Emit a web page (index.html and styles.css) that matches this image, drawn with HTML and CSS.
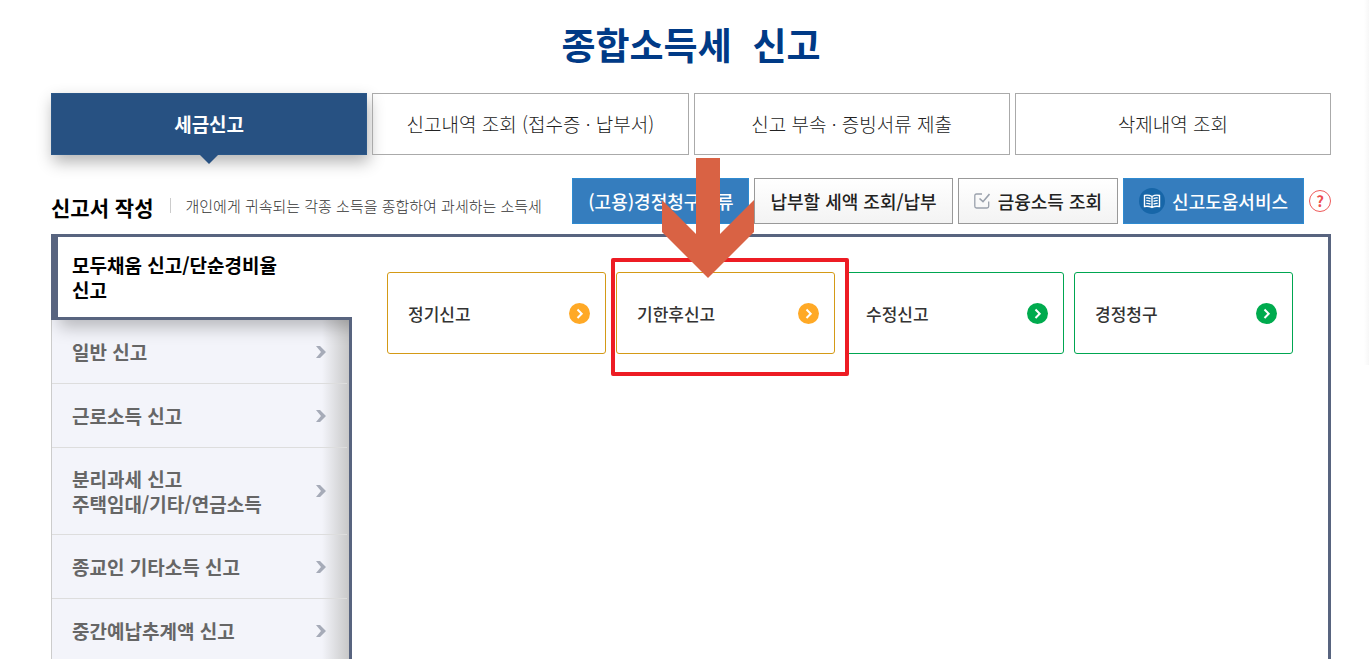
FILE: index.html
```html
<!DOCTYPE html>
<html lang="ko">
<head>
    <meta charset="UTF-8">
    <meta name="viewport" content="width=device-width, initial-scale=1.0">
    <title>종합소득세 신고</title>
    <link rel="stylesheet" href="styles.css">
</head>
<body>

    <div class="page">
        <h1>종합소득세&nbsp; 신고</h1>

        <nav class="tabs">
            <a href="#" class="tab active">세금신고</a>
            <a href="#" class="tab">신고내역 조회 (접수증 · 납부서)</a>
            <a href="#" class="tab">신고 부속 · 증빙서류 제출</a>
            <a href="#" class="tab">삭제내역 조회</a>
        </nav>

        <div class="toolbar">
            <h2>신고서 작성</h2>
            <p class="desc">개인에게 귀속되는 각종 소득을 종합하여 과세하는 소득세</p>
            <div class="tools">
                <button class="tool blue">(고용)경정청구서류</button>
                <button class="tool">납부할 세액 조회/납부</button>
                <button class="tool">
                    <svg class="check-icon" width="16" height="16" viewBox="0 0 16 16" fill="none" stroke="#9aa1ac">
                        <path d="M8 1H2.500Q.8 1 .8 2.700V13.300Q.8 15 2.500 15H13Q14.700 15 14.700 13.300V8.500" stroke-width="1.300"/>
                        <path d="M5.500 5.500L9 8.700L15.500 1" stroke-width="1.600"/>
                    </svg>
                    금융소득 조회
                </button>
                <button class="tool blue">
                    <svg class="book-icon" width="26" height="26" viewBox="0 0 26 26" fill="none" stroke="#fff">
                        <circle cx="13" cy="13" r="13" fill="#1766a8" stroke="none"/>
                        <path d="M13 8.500Q9.500 6.500 5.500 7.500V18.500Q9.500 17.700 13 19.500Q16.500 17.700 20.500 18.500V7.500Q16.500 6.500 13 8.500V19.500" stroke-width="1.400"/>
                        <path d="M7.300 10Q9.500 9.700 11.500 10.700M7.300 12.700Q9.500 12.400 11.500 13.400M7.300 15.400Q9.500 15.100 11.500 16.100M18.700 10Q16.500 9.700 14.500 10.700M18.700 12.700Q16.500 12.400 14.500 13.400M18.700 15.400Q16.500 15.100 14.500 16.100" stroke-width="1.300"/>
                    </svg>
                    신고도움서비스
                </button>
                <button class="help" aria-label="도움말">?</button>
            </div>
        </div>

        <div class="panel">
            <ul class="side">
                <li><a href="#" class="current">모두채움 신고/단순경비율<br>신고</a></li>
                <li><a href="#">일반 신고 <svg width="10" height="12" viewBox="0 0 10 12"><path d="M0 0H4L10 6L4 12H0L5 6Z" fill="#a6abb8"/></svg></a></li>
                <li><a href="#">근로소득 신고 <svg width="10" height="12" viewBox="0 0 10 12"><path d="M0 0H4L10 6L4 12H0L5 6Z" fill="#a6abb8"/></svg></a></li>
                <li><a href="#"><span>분리과세 신고<br>주택임대/기타/연금소득</span> <svg width="10" height="12" viewBox="0 0 10 12"><path d="M0 0H4L10 6L4 12H0L5 6Z" fill="#a6abb8"/></svg></a></li>
                <li><a href="#">종교인 기타소득 신고 <svg width="10" height="12" viewBox="0 0 10 12"><path d="M0 0H4L10 6L4 12H0L5 6Z" fill="#a6abb8"/></svg></a></li>
                <li><a href="#">중간예납추계액 신고 <svg width="10" height="12" viewBox="0 0 10 12"><path d="M0 0H4L10 6L4 12H0L5 6Z" fill="#a6abb8"/></svg></a></li>
            </ul>

            <div class="cards">
                <a href="#" class="card orange">정기신고
                    <svg width="21" height="21" viewBox="0 0 21 21"><circle cx="10.500" cy="10.500" r="10.500"/><path d="M8.500 6.500L12.700 10.700L8.500 15"/></svg>
                </a>
                <div class="marked">
                    <a href="#" class="card orange">기한후신고
                        <svg width="21" height="21" viewBox="0 0 21 21"><circle cx="10.500" cy="10.500" r="10.500"/><path d="M8.500 6.500L12.700 10.700L8.500 15"/></svg>
                    </a>
                    <div class="highlight"></div>
                    <svg class="arrow" width="92" height="120" viewBox="0 0 92 120">
                        <path d="M34 0H58V76L92 42V74L46 120L0 74V42L34 76Z" fill="#d96244"/>
                    </svg>
                </div>
                <a href="#" class="card green">수정신고
                    <svg width="21" height="21" viewBox="0 0 21 21"><circle cx="10.500" cy="10.500" r="10.500"/><path d="M8.500 6.500L12.700 10.700L8.500 15"/></svg>
                </a>
                <a href="#" class="card green">경정청구
                    <svg width="21" height="21" viewBox="0 0 21 21"><circle cx="10.500" cy="10.500" r="10.500"/><path d="M8.500 6.500L12.700 10.700L8.500 15"/></svg>
                </a>
            </div>
        </div>
    </div>

</body>
</html>
```
FILE: styles.css
```css
* {
    box-sizing: border-box;
}

body {
    margin: 0;
    background: linear-gradient(to left, #f7f7f7, #fff) right top / 5px 365px no-repeat #fff;
    color: #333;
    font-family: 'Noto Sans CJK KR', sans-serif;
}

a {
    color: inherit;
    text-decoration: none;
}

button {
    font-family: inherit;
    cursor: pointer;
}

.page {
    display: flex;
    flex-direction: column;
    min-height: 100vh;
    padding: 0 38px 0 51px;
}

h1 {
    margin: 0;
    padding-top: 16px;
    height: 93px;
    font-size: 37px;
    font-weight: 700;
    line-height: 56px;
    text-align: center;
    color: #003a86;
}

/* top tabs */
.tabs {
    display: grid;
    grid-template-columns: repeat(4, 1fr);
    gap: 5px;
}

.tab {
    position: relative;
    height: 62px;
    border: 1px solid #aaa;
    font-size: 19px;
    font-weight: 300;
    line-height: 60px;
    text-align: center;
    color: #222;
}

.tab.active {
    border-color: #2b5788;
    background-color: #275182;
    box-shadow: 2px 7px 15px rgba(0, 0, 0, 0.3);
    color: #fff;
    font-weight: 700;
}

.tab.active::after {
    content: '';
    position: absolute;
    top: 100%;
    left: 50%;
    margin-left: -10px;
    border: 10px solid transparent;
    border-top-color: #275182;
    border-bottom: 0;
}

/* title row with buttons */
.toolbar {
    display: flex;
    align-items: center;
    height: 79px;
    padding-top: 13px;
}

h2 {
    margin: 11px 17px 0 0;
    font-size: 21px;
    font-weight: 700;
    line-height: 30px;
    color: #000;
}

.desc {
    margin: 9px 0 0;
    padding-left: 15px;
    background: linear-gradient(#ccc, #ccc) left center / 1px 15px no-repeat;
    font-size: 15px;
    font-weight: 300;
    line-height: 24px;
}

.tools {
    display: flex;
    align-items: center;
    gap: 5px;
    margin-left: auto;
}

.tool {
    display: flex;
    align-items: center;
    height: 46px;
    padding: 0 15px;
    border: 1px solid #999;
    background: linear-gradient(#fff, #f3f3f3);
    color: #222;
    font-size: 18px;
    font-weight: 500;
    white-space: nowrap;
}

.tool.blue {
    border-color: #2e8ad0;
    background: #357dbe;
    color: #fff;
}

.check-icon {
    margin-right: 8px;
}

.book-icon {
    margin-right: 7px;
}

.help {
    width: 22px;
    height: 22px;
    padding: 0;
    border: 1px solid #ee5a5a;
    border-radius: 50%;
    background: #fff;
    color: #ee4f4f;
    font-size: 15px;
    font-weight: 700;
    line-height: 18px;
}

/* main panel */
.panel {
    display: flex;
    flex: 1;
    border: 3px solid #58647f;
    border-width: 3px 3px 0 0;
}

.side {
    width: 301px;
    margin: 0;
    padding: 0;
    list-style: none;
    background: linear-gradient(to left, #58647f 3px, transparent 3px),
        linear-gradient(to left, #c8c8c8 3px, rgba(200, 200, 200, 0) 30px),
        #f3f4fa;
    border-left: 1px solid #ccc;
    color: #666;
    font-size: 19px;
    font-weight: 700;
    line-height: 25px;
}

.side a {
    display: flex;
    align-items: center;
    justify-content: space-between;
    min-height: 64px;
    margin-right: 5px;
    padding: 18px 21px 18px 20px;
    border-bottom: 1px solid #ddd;
}

.side .current {
    min-height: 83px;
    margin: 0 0 0 -1px;
    padding: 15px 14px;
    border: solid #58647f;
    border-width: 0 0 3px 7px;
    background-color: #fff;
    box-shadow: 8px 7px 16px rgba(0, 0, 0, 0.25);
    clip-path: inset(0 3px -30px 0);
    color: #000;
}

/* the clip above leaves the last 3px open */
.side li:first-child {
    background: linear-gradient(#58647f, #58647f) left bottom / 100% 3px no-repeat #fff;
}

.cards {
    display: grid;
    flex: 1;
    grid-template-columns: repeat(4, 1fr);
    align-content: start;
    gap: 10px;
    padding: 35px;
}

.card {
    display: flex;
    align-items: center;
    justify-content: space-between;
    height: 82px;
    padding: 0 15px 0 20px;
    border: 1px solid;
    border-radius: 3px;
    font-size: 17px;
    font-weight: 500;
}

.card path {
    fill: none;
    stroke: #fff;
    stroke-width: 2;
}

.orange {
    border-color: #d49a16;
}

.orange circle {
    fill: #ffa926;
}

.green {
    border-color: #00a651;
}

.green circle {
    fill: #00ab4e;
}

/* red box and arrow over the second card */
.marked {
    position: relative;
}

.highlight {
    position: absolute;
    top: -14px;
    right: -14px;
    bottom: -22px;
    left: -5px;
    border: 4px solid #ed1c24;
    border-radius: 2px;
    pointer-events: none;
    z-index: 1;
}

.arrow {
    position: absolute;
    bottom: 76px;
    left: 46px;
    pointer-events: none;
    z-index: 2;
}
```
